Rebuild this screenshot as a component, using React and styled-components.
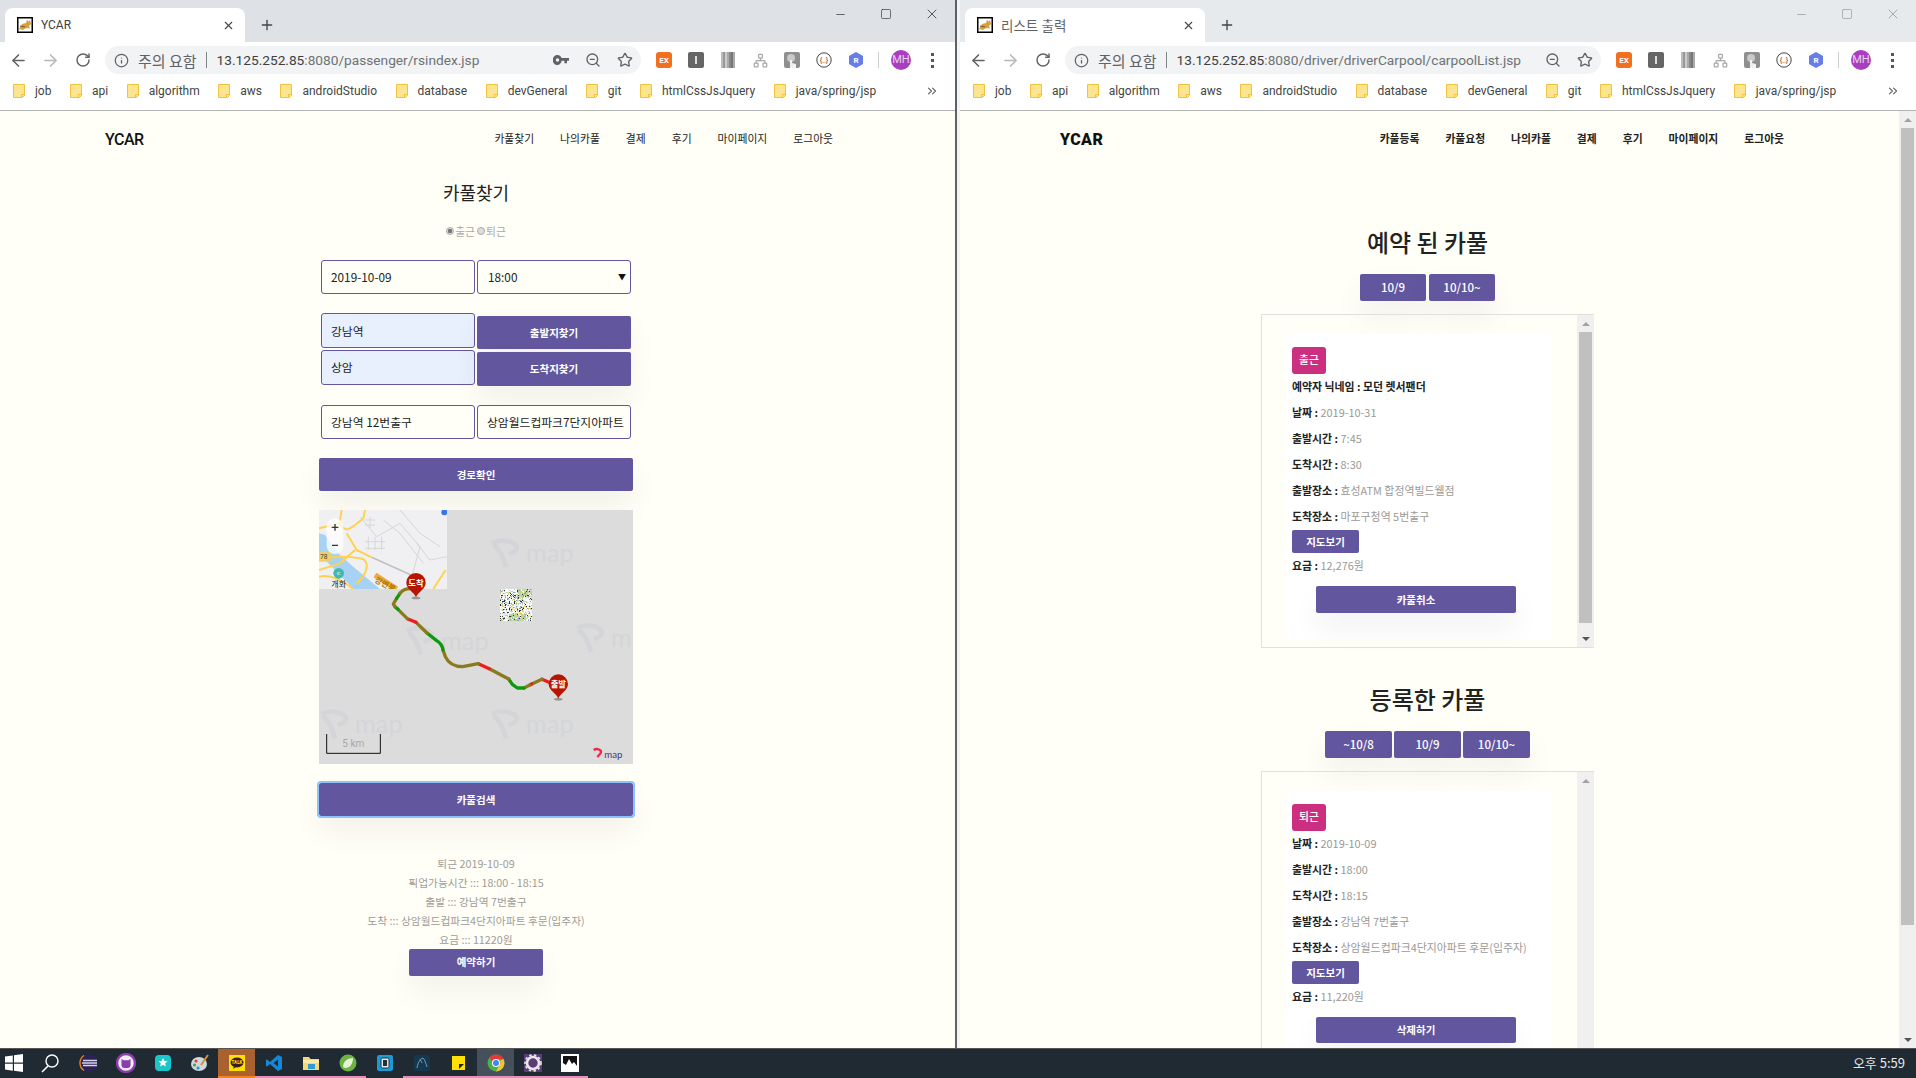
import React from 'react'
import styled, { createGlobalStyle } from 'styled-components'
import { ArrowLeft, ArrowRight, RotateCw, Info, ZoomOut, Star, Plus, X, Minus, Square, ChevronsRight, Network } from 'lucide-react'

const KR = `"Noto Sans CJK KR", "Noto Sans", sans-serif`
const UI = `Roboto, "Noto Sans CJK KR", sans-serif`
const PURPLE = '#62569f'

const Global = createGlobalStyle`
  html, body { margin: 0; padding: 0; background: #fffff8; overflow: hidden; }
  * { box-sizing: border-box; }
`

const Screen = styled.div`
  width: 1916px;
  height: 1078px;
  display: flex;
  flex-direction: column;
  overflow: hidden;
  font-family: ${KR};
`
const Desktop = styled.div`
  height: 1048px;
  display: flex;
`
const Divider = styled.div`
  width: 2px;
  background: #5e6165;
`
const Win = styled.div`
  width: ${p => (p.$right ? '959px' : '955px')};
  display: flex;
  flex-direction: column;
  border-left: ${p => (p.$right ? '3px solid #f3f4f5' : '0')};
`

/* browser chrome */
const TabStrip = styled.div`
  height: 42px;
  display: flex;
  background: ${p => (p.$active ? '#dee1e6' : '#e7eaed')};
  padding-left: 5px;
`
const Tab = styled.div`
  width: 240px;
  height: 34px;
  margin-top: 8px;
  display: flex;
  align-items: center;
  padding: 0 10px 0 12px;
  background: #fff;
  border-radius: 8px 8px 0 0;
  font: 12px ${UI};
  color: ${p => (p.$active ? '#3c4043' : '#5f6368')};
`
const TabTitle = styled.span`
  margin-left: 8px;
  margin-right: auto;
  font-size: ${p => (p.$kr ? '13.5px' : '12px')};
`
const TabClose = styled.span`
  display: flex;
  color: #444;
`
const NewTab = styled.div`
  width: 28px;
  margin-left: 8px;
  padding-top: 14px;
  text-align: center;
  color: #444;
`
const Controls = styled.div`
  margin-left: auto;
  display: flex;
  color: ${p => (p.$active ? '#222' : '#8a8d90')};
`
const Control = styled.div`
  width: 46px;
  height: 28px;
  display: flex;
  align-items: center;
  justify-content: center;
`
const Toolbar = styled.div`
  height: 36px;
  display: flex;
  align-items: center;
  background: #fff;
  padding-left: 2px;
`
const NavIcon = styled.div`
  width: 32.5px;
  display: flex;
  justify-content: center;
  color: ${p => (p.$off ? '#b6b8ba' : '#5f6368')};
`
const Omnibox = styled.div`
  width: 536px;
  height: 28px;
  flex: none;
  margin-left: 5.5px;
  display: flex;
  align-items: center;
  padding: 0 8px 0 9px;
  background: #f1f3f4;
  border-radius: 14px;
  color: #5f6368;
`
const Warn = styled.span`
  margin-left: 9px;
  font: 15px ${KR};
  color: #5f6368;
`
const Sep = styled.span`
  width: 1px;
  height: 16px;
  margin: 0 10px 0 9px;
  background: #80868b;
`
const Url = styled.span`
  font: 13.7px ${UI};
  color: #6d7276;
  b { font-weight: 400; color: #3c4043; }
`
const BoxIcons = styled.div`
  margin-left: auto;
  display: flex;
  gap: 16px;
  align-items: center;
  color: #5f6368;
`
const Exts = styled.div`
  margin-left: 7px;
  display: flex;
  align-items: center;
`
const Ext = styled.div`
  width: 32px;
  flex: none;
  display: flex;
  justify-content: center;
`
const ExtBar = styled.span`
  width: 1px;
  height: 16px;
  flex: none;
  margin: 0 12px 0 6px;
  background: #ccc;
`
const Avatar = styled.div`
  width: 20px;
  height: 20px;
  flex: none;
  border-radius: 50%;
  background: #a93fbf;
  color: #e9d0ee;
  font: 11px/20px ${UI};
  text-align: center;
`
const Dots = styled.div`
  margin-left: 20px;
  width: 3px;
  height: 15px;
  flex: none;
  background: radial-gradient(circle at 50% 1.5px, #555 1.5px, transparent 1.7px) 0 0 / 3px 6px repeat-y;
`
const Bookmarks = styled.div`
  height: 33px;
  display: flex;
  align-items: center;
  gap: 18.5px;
  padding: 0 0 7px 13px;
  background: #fff;
  border-bottom: 1px solid #b4b4b4;
  font: 12px ${UI};
  color: #444;
`
const Mark = styled.div`
  display: flex;
  align-items: center;
  gap: 10px;
`
const More = styled.div`
  margin-left: auto;
  margin-right: 16px;
  color: #666;
  display: flex;
`

/* pages */
const Page = styled.div`
  flex: 1;
  min-height: 0;
  display: flex;
  background: #fffff7;
  overflow: hidden;
`
const Main = styled.div`
  flex: 1;
  min-width: 0;
  display: flex;
  flex-direction: column;
`
const Nav = styled.div`
  height: 56px;
  flex: none;
  display: flex;
  align-items: center;
  justify-content: space-between;
  padding: ${p => p.$pad};
`
const Logo = styled.div`
  font-family: Roboto, sans-serif;
  font-size: 16px;
  font-weight: ${p => (p.$heavy ? 900 : 500)};
  letter-spacing: ${p => (p.$heavy ? '0.4px' : '-0.5px')};
  color: #111;
`
const Links = styled.div`
  display: flex;
  gap: 26px;
  padding-bottom: 2px;
  font-size: 10.8px;
  font-weight: ${p => (p.$heavy ? 700 : 400)};
  color: #222;
`
const Form = styled.div`
  width: 314px;
  margin-left: 319px;
  display: flex;
  flex-direction: column;
`
const Title = styled.h1`
  margin: 11px 0 0;
  height: 28px;
  font-size: 18px;
  line-height: 28px;
  font-weight: 400;
  text-align: center;
  color: #222;
`
const Radios = styled.div`
  margin-top: 17px;
  height: 16px;
  display: flex;
  justify-content: center;
  align-items: center;
  padding-right: 2px;
  font-size: 10.8px;
  color: #aaa;
`
const Radio = styled.span`
  width: 8px;
  height: 8px;
  margin: 0 1px 0 2px;
  border: 1px solid #aaa;
  border-radius: 50%;
  background: ${p => (p.$on ? 'radial-gradient(circle, #777 2px, #ddd 2.5px)' : '#ddd')};
`
const Pair = styled.div`
  margin-top: ${p => p.$top};
  padding: 0 2px;
  display: grid;
  grid-template-columns: 154px 154px;
  gap: 0 2px;
`
const FieldStack = styled.div`
  display: flex;
  flex-direction: column;
  gap: 1.5px;
`
const Field = styled.input`
  width: 154px;
  height: ${p => p.$h || '34px'};
  margin: 0;
  padding: 0 0 1px 9px;
  border: 1px solid ${PURPLE};
  border-radius: 3px;
  outline: 0;
  background: ${p => (p.$auto ? '#e8f0fe' : '#fffff7')};
  font: 11.8px ${KR};
  color: #222;
`
const SelectBox = styled.div`
  height: 34px;
  display: flex;
  align-items: center;
  justify-content: space-between;
  padding: 0 4px 1px 10px;
  border: 1px solid ${PURPLE};
  border-radius: 3px;
  font-size: 11.8px;
  color: #222;
  span:last-child { font-size: 8px; color: #111; }
`
const Btn = styled.div`
  display: flex;
  align-items: center;
  justify-content: center;
  flex: none;
  width: ${p => p.$w || 'auto'};
  height: ${p => p.$h || '27px'};
  margin: ${p => p.$m || '0'};
  padding-bottom: 1px;
  background: ${PURPLE};
  border-radius: 2px;
  color: #fff;
  font-size: ${p => p.$fs || '10.5px'};
  font-weight: ${p => (p.$light ? 500 : 700)};
  box-shadow: ${p => (p.$flat ? 'none' : '0 15px 30px rgba(0,0,0,.06)')};
  outline: ${p => (p.$focus ? '2px solid #8fc1fb' : '0')};
`
const FindButtons = styled.div`
  display: flex;
  flex-direction: column;
  gap: 3px;
  padding-top: 3px;
`
const MapFrame = styled.div`
  margin-top: 19px;
  height: 254px;
  background: #dcdcdc;
  svg { display: block; }
`
const Result = styled.div`
  margin-top: 37.5px;
  font-size: 10.75px;
  line-height: 19px;
  text-align: center;
  color: #a09c98;
`

/* right page */
const Heading = styled.h2`
  margin: ${p => p.$top} 0 0;
  height: 36px;
  font-size: 24px;
  line-height: 36px;
  font-weight: 500;
  color: #222;
`
const List = styled.div`
  display: flex;
  flex-direction: column;
  align-items: center;
  padding-right: 4px;
`
const DateRow = styled.div`
  margin: 14px 0 13px;
  display: flex;
  gap: ${p => p.$gap};
`
const Box = styled.div`
  width: 333px;
  flex: none;
  height: ${p => p.$h};
  display: flex;
  border: 1px solid #e0e0dc;
  border-right: 0;
  padding-left: 24px;
`
const Card = styled.div`
  width: 266px;
  height: 305px;
  margin-top: 19px;
  padding: 13px 0 0 6px;
  flex: none;
  background: #fff;
  border-radius: 8px;
`
const Badge = styled.div`
  width: 34px;
  height: 27px;
  border-radius: 3px;
  background: #cd2f80;
  color: #fff;
  font-size: 10.8px;
  font-weight: 500;
  line-height: 25px;
  text-align: center;
`
const Row = styled.div`
  height: 26px;
  line-height: 25px;
  font-size: 10.9px;
  font-weight: 700;
  color: #222;
  white-space: nowrap;
  span { font-weight: 400; color: #9b9995; }
`
const Track = styled.div`
  width: 17px;
  margin-left: auto;
  flex: none;
  display: flex;
  flex-direction: column;
  align-items: center;
  background: #f0f0f0;
`
const ArrowCell = styled.div`
  height: 17px;
  flex: none;
  display: flex;
  align-items: center;
  justify-content: center;
  margin-top: ${p => p.$auto ? 'auto' : '0'};
  &::before {
    content: '';
    border-left: 4px solid transparent;
    border-right: 4px solid transparent;
    border-${p => (p.$down ? 'top' : 'bottom')}: 4px solid ${p => (p.$down ? '#555' : '#a3a3a3')};
  }
`
const Thumb = styled.div`
  width: 13px;
  height: ${p => p.$h};
  flex: none;
  background: #c0c0c0;
`

/* taskbar */
const Taskbar = styled.div`
  height: 30px;
  flex: none;
  display: flex;
  align-items: stretch;
  background: #1f2a33;
  border-top: 1px solid #555;
  padding-left: 0;
`
const TaskSlot = styled.div`
  width: 37px;
  flex: none;
  margin-left: ${p => p.$ml || 0};
  display: flex;
  align-items: center;
  justify-content: center;
  background: ${p => p.$bg || 'transparent'};
  border-bottom: 2px solid ${p => p.$line || 'transparent'};
`
const Clock = styled.div`
  margin-left: auto;
  padding-right: 11px;
  line-height: 28px;
  font-size: 13px;
  color: #e8e8e8;
`

/* drawn things */
const Folder = () => (
  <svg width="12" height="14" viewBox="0 0 12 14">
    <path d="M.5 .5h11v11l-2 2H.5z" fill="#fde58f" stroke="#f0c33c" />
    <path d="M8.5 13.5v-3h3" fill="none" stroke="#f0c33c" />
  </svg>
)

const Favicon = () => (
  <svg width="16" height="16" viewBox="0 0 16 16">
    <rect x=".75" y=".75" width="14.5" height="14.5" fill="#fff" stroke="#000" strokeWidth="1.5" />
    <path d="M2 12l3-5 4-1 1-3 1.5 1.5L13 3l1 4-2 2 1 3-2-1-3 .5-2 1.5z" fill="#d8a03c" />
    <path d="M3 9l5 1" stroke="#6b5a3c" />
  </svg>
)

const KeyIcon = () => (
  <svg width="16" height="10" viewBox="0 0 16 10">
    <path d="M4.500 0a4.500 5 0 0 1 4.200 3H16v2.800h-2v2.400h-2.600V5.800H8.700A4.500 5 0 1 1 4.500 0zm0 3.200a1.700 1.800 0 1 0 0 3.600 1.700 1.800 0 0 0 0-3.600z" fill="#5f6368" fillRule="evenodd" />
  </svg>
)

const ExtEx = () => (
  <svg width="16" height="16" viewBox="0 0 16 16">
    <rect width="16" height="16" rx="3" fill="#f26f21" />
    <text x="8" y="11" textAnchor="middle" fontSize="8" fontWeight="700" fill="#fff" fontFamily="Roboto">EX</text>
  </svg>
)
const ExtBlock = () => (
  <svg width="16" height="16" viewBox="0 0 16 16">
    <rect width="16" height="16" rx="2" fill="#666" />
    <rect x="7" y="4" width="2" height="8" fill="#ddd" />
  </svg>
)
const ExtStripes = () => (
  <svg width="14" height="16" viewBox="0 0 14 16">
    {['#bbb', '#999', '#ccc', '#aaa', '#888', '#777', '#aaa'].map((c, i) => (
      <rect key={i} x={i * 2} width="2" height="16" fill={c} />
    ))}
  </svg>
)
const ExtPhoto = () => (
  <svg width="16" height="16" viewBox="0 0 16 16">
    <rect width="16" height="16" rx="2" fill="#8f8f8f" />
    <circle cx="7" cy="6" r="4" fill="#c9c9c9" />
    <path d="M6 16V8h2v3l4 1v4z" fill="#eef2f7" />
  </svg>
)
const ExtCode = () => (
  <svg width="16" height="16" viewBox="0 0 16 16">
    <circle cx="8" cy="8" r="7.2" fill="#fff" stroke="#444" />
    <text x="8" y="10.5" textAnchor="middle" fontSize="7" fill="#333" fontFamily="Roboto">{'{..}'}</text>
  </svg>
)
const ExtHex = () => (
  <svg width="16" height="16" viewBox="0 0 16 16">
    <path d="M8 0l7 4v8l-7 4-7-4V4z" fill="#667eea" />
    <text x="8" y="11" textAnchor="middle" fontSize="8" fontWeight="700" fill="#fff" fontFamily="Roboto">R</text>
  </svg>
)

const routeParts = [
  ['#ee1c1c', 'M750 548 L726 538'],
  ['#8b7a1c', 'M726 538 L695 552'],
  ['#ee1c1c', 'M695 552 L688 556'],
  ['#8b7a1c', 'M688 556 L672 564'],
  ['#0b9a0b', 'M672 564 L652 564 L637 553 L626 537'],
  ['#8b7a1c', 'M626 537 L568 506'],
  ['#ee1c1c', 'M568 506 L535 491'],
  ['#8b7a1c', 'M535 491 L488 500 C462 500 445 490 436 470 L429 450'],
  ['#0b9a0b', 'M429 450 C427 436 420 428 410 422 L381 399'],
  ['#8b7a1c', 'M381 399 L348 367'],
  ['#ee1c1c', 'M348 367 L322 356'],
  ['#8b7a1c', 'M322 356 L294 328'],
  ['#0b9a0b', 'M294 328 L285 320'],
  ['#8b7a1c', 'M285 320 L280 312 L290 295'],
  ['#0b9a0b', 'M290 295 L300 280'],
  ['#8b7a1c', 'M300 280 C308 270 318 266 330 266'],
]

const waterMarks = [[570, 115, 'map'], [315, 378, 'map'], [825, 370, 'm'], [57, 628, 'map'], [570, 628, 'map']]

// speckled tile that failed to load, looks random but stays the same each run
const noise = []
let seed = 12345
for (let r = 0; r < 32; r++) {
  for (let c = 0; c < 32; c++) {
    seed = (seed * 1103515245 + 12345) & 0x7fffffff
    const k = (seed >> 8) % 100
    const corner = (r > 24 && c > 8 && c < 26) || (r < 8 && c > 16)
    let fill = '#ffffff'
    if (k < 8) fill = '#333333'
    else if (k < 14) fill = '#7ea0c8'
    else if (k < 20) fill = '#e8cf72'
    else if (k < (corner ? 85 : 34)) fill = '#bcd596'
    else if (k < (corner ? 92 : 60)) fill = '#ececec'
    noise.push(<rect key={r + '-' + c} x={600 + c * 3} y={267 + r * 3} width="3" height="3" fill={fill} />)
  }
}

const Pin = ({ x, y, label }) => (
  <g>
    <ellipse cx={x} cy={y + 2} rx="13" ry="4" fill="#777" opacity=".7" />
    <path d={`M${x} ${y} C${x - 5} ${y - 16} ${x - 29} ${y - 24} ${x - 29} ${y - 44} A29 29 0 1 1 ${x + 29} ${y - 44} C${x + 29} ${y - 24} ${x + 5} ${y - 16} ${x} ${y}Z`} fill="#b81500" />
    <text x={x} y={y - 35} textAnchor="middle" fontSize="25" fontWeight="700" fill="#fff" fontFamily={KR}>{label}</text>
  </g>
)

const RouteMap = () => (
  <svg width="314" height="254" viewBox="57 30 942 762">
    <defs>
      <clipPath id="tile"><rect x="57" y="30" width="384" height="237" /></clipPath>
    </defs>
    <rect x="57" y="30" width="942" height="762" fill="#dcdcdc" />
    {waterMarks.map(([x, y, word]) => (
      <g key={x + '-' + y} fill="none" stroke="#d4d5d8">
        <path d={`M${x + 6} ${y + 14} C${x + 30} ${y + 2} ${x + 62} ${y + 4} ${x + 80} ${y + 22} C${x + 84} ${y + 40} ${x + 66} ${y + 42} ${x + 56} ${y + 48}`} strokeWidth="14" />
        <path d={`M${x + 10} ${y + 20} C${x + 30} ${y + 30} ${x + 40} ${y + 60} ${x + 48} ${y + 86}`} strokeWidth="14" />
        <text x={x + 108} y={y + 72} fontSize="76" fill="#d4d5d8" stroke="none" fontFamily="Lato, sans-serif">{word}</text>
      </g>
    ))}
    <g clipPath="url(#tile)">
      <rect x="57" y="30" width="384" height="237" fill="#f0f0f3" />
      <path d="M57 100 L75 105 L120 165 L165 205 L240 267 L160 267 L110 215 L70 175 L57 155Z" fill="#a8d2f4" />
      <path d="M57 155h36v30H57z" fill="#e8cf72" />
      <g fill="none" stroke="#d6d6d6" strokeWidth="3">
        <path d="M180 50l50 60 70-40 60 70-30 110" />
        <path d="M195 125h60M195 145h60M205 110v40M225 110v40M245 110v40M195 60h30M195 75h30M210 50v35" />
        <path d="M250 60l50 40 70 90M300 30l60 70 60 40M350 130l40 50 50-10" />
        <path d="M215 172 L340 228" stroke="#c4bfbf" strokeWidth="5" />
      </g>
      <g fill="none" stroke="#ffd24d" strokeWidth="6">
        <path d="M125 30 L118 70 L57 85" />
        <path d="M118 70 C135 100 150 90 190 55 L195 30" />
        <path d="M140 100 L170 150 L215 172" />
        <path d="M57 180 C110 165 150 170 180 175 C215 180 200 225 170 250" />
        <path d="M57 230 C95 220 130 245 160 267" />
        <path d="M57 210 L120 190 L165 150" />
        <path d="M437 210 L400 267" />
        <path d="M225 225 L290 267" stroke="#f2a93b" strokeWidth="16" />
      </g>
      <circle cx="116" cy="220" r="16" fill="#3fb8ae" />
      <text x="116" y="225" textAnchor="middle" fontSize="13" fill="#fff" fontFamily="Roboto">IC</text>
      <text x="116" y="262" textAnchor="middle" fontSize="24" fill="#222" fontFamily={KR}>개화</text>
      <text x="60" y="177" fontSize="20" fill="#444" fontFamily="Roboto">78</text>
      <text x="222" y="245" fontSize="24" fontWeight="700" fill="#a87a08" fontFamily={KR} transform="rotate(28 222 245)">강변북</text>
      <circle cx="433" cy="37" r="9" fill="#3576e8" />
      <rect x="80" y="55" width="50" height="107" rx="24" fill="#fff" opacity=".75" />
      <path d="M105 72v20M95 82h20M96 136h18" stroke="#333" strokeWidth="4" />
    </g>
    {noise}
    <g fill="none" strokeWidth="10" strokeLinecap="round" strokeLinejoin="round">
      {routeParts.map(([c, d], i) => <path key={i} d={d} stroke={c} />)}
    </g>
    <Pin x={348} y={292} label="도착" />
    <Pin x={775} y={596} label="출발" />
    <path d="M80 702v58h161v-58" fill="none" stroke="#111" strokeWidth="3" />
    <text x="160" y="742" textAnchor="middle" fontSize="30" fill="#a8a8a8" fontFamily="Roboto">5 km</text>
    <path d="M881 750 C890 744 904 748 903 757 C902 764 895 762 893 772" fill="none" stroke="#ea2a4c" strokeWidth="7" />
    <text x="913" y="773" fontSize="29" fill="#3c3a75" fontFamily="Lato, sans-serif">map</text>
  </svg>
)

const task = {
  win: (
    <svg width="20" height="20" viewBox="0 0 20 20"><path d="M1 3.600l7.800-1.100v7H1zM10 2.300L19 1v8.500h-9zM1 10.700h7.800v7L1 16.500zM10 10.700h9V19l-9-1.300z" fill="#fff" /></svg>
  ),
  search: (
    <svg width="20" height="20" viewBox="0 0 20 20"><circle cx="12" cy="8" r="6" fill="none" stroke="#fff" strokeWidth="1.4" /><path d="M8 13l-6 6" stroke="#fff" strokeWidth="1.6" /></svg>
  ),
  eclipse: (
    <svg width="20" height="20" viewBox="0 0 20 20"><circle cx="10" cy="10" r="9" fill="#2c2255" /><path d="M4 7.500h14M3 10h15M4 12.500h14" stroke="#d8d4ec" strokeWidth="1.4" /><path d="M5 2.500a9 9 0 0 0 0 15" fill="none" stroke="#e8871e" strokeWidth="1.4" /></svg>
  ),
  cat: (
    <svg width="20" height="20" viewBox="0 0 20 20"><circle cx="10" cy="10" r="9" fill="#f1e9f6" stroke="#8a3fa8" strokeWidth="2.4" /><path d="M5.500 6l2 1.300h5L14.500 6v6.500a3 3 0 0 1-3 2.500h-3a3 3 0 0 1-3-2.500z" fill="#8a3fa8" /></svg>
  ),
  star: (
    <svg width="18" height="20" viewBox="0 0 18 20"><rect x="1" y="2" width="16" height="16" rx="4" fill="#1cc5c8" /><path d="M9 5l1.400 3 3.100.3-2.400 2.100.8 3.100L9 11.800l-2.900 1.700.8-3.100-2.400-2.100 3.100-.3z" fill="#fff" /></svg>
  ),
  paint: (
    <svg width="20" height="20" viewBox="0 0 20 20"><ellipse cx="9" cy="11" rx="8" ry="7" fill="#cfd8dc" /><circle cx="6" cy="8" r="1.500" fill="#e53935" /><circle cx="4.500" cy="12" r="1.500" fill="#43a047" /><circle cx="8" cy="15" r="1.500" fill="#1e88e5" /><path d="M11 12L18 2" stroke="#d98e3a" strokeWidth="2" /></svg>
  ),
  kakao: (
    <svg width="16" height="16" viewBox="0 0 16 16"><rect width="16" height="16" fill="#ffe000" /><ellipse cx="8" cy="7.500" rx="6.500" ry="5" fill="#3a1d1d" /><path d="M5 11l-1 3 3-2z" fill="#3a1d1d" /><text x="8" y="9.300" textAnchor="middle" fontSize="4.600" fontWeight="700" fill="#ffe000" fontFamily="Roboto">TALK</text></svg>
  ),
  vscode: (
    <svg width="18" height="18" viewBox="0 0 18 18"><path d="M13 1l4 2v12l-4 2-8-7-3 2.500L1 12V6l1-.5L5 8zM13 5.500L8.500 9l4.500 3.500z" fill="#1787d8" /></svg>
  ),
  folder: (
    <svg width="18" height="18" viewBox="0 0 18 18"><path d="M1 3h6l1.500 2H17v11H1z" fill="#f7d774" /><path d="M1 6h16v3H1z" fill="#fbe9a8" /><rect x="6" y="10" width="7" height="5" fill="#2e9ad6" /></svg>
  ),
  spring: (
    <svg width="18" height="18" viewBox="0 0 18 18"><circle cx="9" cy="9" r="8.500" fill="#6db33f" /><path d="M4 13C4 7 9 4 14 4c0 6-3 10-8 10" fill="#e6f3da" /></svg>
  ),
  box: (
    <svg width="18" height="18" viewBox="0 0 18 18"><rect x="1" y="1" width="16" height="16" rx="2" fill="#1c9ad6" /><rect x="5" y="4" width="8" height="10" rx="1.500" fill="#dfe9ef" stroke="#23303a" /><rect x="7" y="6" width="4" height="6" fill="#23303a" /></svg>
  ),
  sql: (
    <svg width="18" height="18" viewBox="0 0 18 18"><rect x="1" y="1" width="16" height="16" rx="3" fill="#16384f" /><path d="M4 14C5 8 7 5 10 4c2 2 3 6 4 9M7 5l2 4" fill="none" stroke="#6f9ab5" /></svg>
  ),
  note: (
    <svg width="16" height="16" viewBox="0 0 16 16"><path d="M1 1h13v14H1z" fill="#ffe000" /><path d="M8 14V9h5z" fill="#222" /></svg>
  ),
  chrome: (
    <svg width="18" height="18" viewBox="0 0 18 18"><circle cx="9" cy="9" r="8.500" fill="#4caf50" /><path d="M9 .5A8.500 8.500 0 0 1 16.400 5H9a4 4 0 0 0-3.800 2.800L2.400 3.600A8.500 8.500 0 0 1 9 .5z" fill="#e53935" /><path d="M16.400 5A8.500 8.500 0 0 1 9 17.500l3.400-6.300A4 4 0 0 0 13 7z" fill="#fbc02d" /><circle cx="9" cy="9" r="4" fill="#fff" /><circle cx="9" cy="9" r="3" fill="#4285f4" /></svg>
  ),
  gear: (
    <svg width="20" height="20" viewBox="0 0 20 20"><rect x="1" y="1" width="18" height="18" fill="#5b3b78" /><circle cx="10" cy="10" r="6" fill="none" stroke="#e8e8e8" strokeWidth="2.600" /><circle cx="10" cy="10" r="8" fill="none" stroke="#e8e8e8" strokeWidth="1.600" strokeDasharray="2.400 2.400" /></svg>
  ),
  photo: (
    <svg width="20" height="20" viewBox="0 0 20 20"><rect x="1" y="1" width="18" height="18" fill="#fff" /><path d="M3 3h14v10l-3-4-2 2-3-5-3 6-3-2z" fill="#111" /></svg>
  ),
}

const PINK = '#e58dbc'
const taskItems = [
  { k: 'win', ml: '-5px' }, { k: 'search', ml: '-1px' }, { k: 'eclipse', ml: '2px' }, { k: 'cat' }, { k: 'star' }, { k: 'paint' },
  { k: 'kakao', bg: '#a8612f', line: '#f58220' },
  { k: 'vscode', line: PINK }, { k: 'folder', line: PINK }, { k: 'spring', line: PINK }, { k: 'box' },
  { k: 'sql', line: PINK }, { k: 'note', line: PINK },
  { k: 'chrome', bg: '#46505a', line: PINK },
  { k: 'gear', line: PINK }, { k: 'photo', line: PINK },
]

const marks = ['job', 'api', 'algorithm', 'aws', 'androidStudio', 'database', 'devGeneral', 'git', 'htmlCssJsJquery', 'java/spring/jsp']

const Chrome = ({ active, title, path, showKey }) => (
  <>
    <TabStrip $active={active}>
      <Tab $active={active}>
        <Favicon />
        <TabTitle $kr={!active}>{title}</TabTitle>
        <TabClose><X size={13} strokeWidth={2} /></TabClose>
      </Tab>
      <NewTab><Plus size={16} strokeWidth={2} /></NewTab>
      <Controls $active={active}>
        <Control><Minus size={13} strokeWidth={1.2} /></Control>
        <Control><Square size={12} strokeWidth={1.2} /></Control>
        <Control><X size={16} strokeWidth={1.1} /></Control>
      </Controls>
    </TabStrip>
    <Toolbar>
      <NavIcon><ArrowLeft size={19} /></NavIcon>
      <NavIcon $off><ArrowRight size={19} /></NavIcon>
      <NavIcon><RotateCw size={16} strokeWidth={2.2} /></NavIcon>
      <Omnibox>
        <Info size={15} />
        <Warn>주의 요함</Warn>
        <Sep />
        <Url><b>13.125.252.85</b>{path}</Url>
        <BoxIcons>
          {showKey && <KeyIcon />}
          <ZoomOut size={16} />
          <Star size={16} />
        </BoxIcons>
      </Omnibox>
      <Exts>
        <Ext><ExtEx /></Ext>
        <Ext><ExtBlock /></Ext>
        <Ext><ExtStripes /></Ext>
        <Ext><Network size={15} color="#a9a9a9" /></Ext>
        <Ext><ExtPhoto /></Ext>
        <Ext><ExtCode /></Ext>
        <Ext><ExtHex /></Ext>
        <ExtBar />
        <Avatar>MH</Avatar>
        <Dots />
      </Exts>
    </Toolbar>
    <Bookmarks>
      {marks.map(m => <Mark key={m}><Folder /><span>{m}</span></Mark>)}
      <More><ChevronsRight size={14} /></More>
    </Bookmarks>
  </>
)

const Info2 = ({ label, children }) => <Row>{label} : <span>{children}</span></Row>

const SearchPage = () => (
  <Page>
    <Main>
      <Nav $pad="0 122px 0 105px">
        <Logo>YCAR</Logo>
        <Links>
          <span>카풀찾기</span><span>나의카풀</span><span>결제</span><span>후기</span><span>마이페이지</span><span>로그아웃</span>
        </Links>
      </Nav>
      <Form>
        <Title>카풀찾기</Title>
        <Radios><Radio $on />출근<Radio />퇴근</Radios>
        <Pair $top="21px">
          <Field readOnly value="2019-10-09" />
          <SelectBox><span>18:00</span><span>▼</span></SelectBox>
        </Pair>
        <Pair $top="19px">
          <FieldStack>
            <Field $auto $h="35px" readOnly value="강남역" />
            <Field $auto $h="35px" readOnly value="상암" />
          </FieldStack>
          <FindButtons>
            <Btn $h="33px">출발지찾기</Btn>
            <Btn $h="34px">도착지찾기</Btn>
          </FindButtons>
        </Pair>
        <Pair $top="19px">
          <Field readOnly value="강남역 12번출구" />
          <Field readOnly value="상암월드컵파크7단지아파트" />
        </Pair>
        <Btn $h="33px" $m="19px 0 0">경로확인</Btn>
        <MapFrame><RouteMap /></MapFrame>
        <Btn $h="33px" $m="19px 0 0" $focus>카풀검색</Btn>
        <Result>
          <div>퇴근 2019-10-09</div>
          <div>픽업가능시간 ::: 18:00 - 18:15</div>
          <div>출발 ::: 강남역 7번출구</div>
          <div>도착 ::: 상암월드컵파크4단지아파트 후문(입주자)</div>
          <div>요금 ::: 11220원</div>
        </Result>
        <Btn $w="134px" $m="0 0 0 90px">예약하기</Btn>
      </Form>
    </Main>
  </Page>
)

const ListPage = () => (
  <Page>
    <Main>
      <Nav $pad="0 115px 0 100px">
        <Logo $heavy>YCAR</Logo>
        <Links $heavy>
          <span>카풀등록</span><span>카풀요청</span><span>나의카풀</span><span>결제</span><span>후기</span><span>마이페이지</span><span>로그아웃</span>
        </Links>
      </Nav>
      <List>
        <Heading $top="57px">예약 된 카풀</Heading>
        <DateRow $gap="3px">
          <Btn $w="66px" $fs="11.5px" $light>10/9</Btn>
          <Btn $w="66px" $fs="11.5px" $light>10/10~</Btn>
        </DateRow>
        <Box $h="334px">
          <Card>
            <Badge>출근</Badge>
            <Row>예약자 닉네임 : 모던 렛서팬더</Row>
            <Info2 label="날짜">2019-10-31</Info2>
            <Info2 label="출발시간">7:45</Info2>
            <Info2 label="도착시간">8:30</Info2>
            <Info2 label="출발장소">효성ATM 합정역빌드웰점</Info2>
            <Info2 label="도착장소">마포구청역 5번출구</Info2>
            <Btn $w="67px" $h="23px" $flat>지도보기</Btn>
            <Info2 label="요금">12,276원</Info2>
            <Btn $w="200px" $m="7px 0 0 24px">카풀취소</Btn>
          </Card>
          <Track>
            <ArrowCell />
            <Thumb $h="291px" />
            <ArrowCell $down $auto />
          </Track>
        </Box>
        <Heading $top="33px">등록한 카풀</Heading>
        <DateRow $gap="2px">
          <Btn $w="67px" $fs="11.5px" $light>~10/8</Btn>
          <Btn $w="67px" $fs="11.5px" $light>10/9</Btn>
          <Btn $w="67px" $fs="11.5px" $light>10/10~</Btn>
        </DateRow>
        <Box $h="334px">
          <Card>
            <Badge>퇴근</Badge>
            <Info2 label="날짜">2019-10-09</Info2>
            <Info2 label="출발시간">18:00</Info2>
            <Info2 label="도착시간">18:15</Info2>
            <Info2 label="출발장소">강남역 7번출구</Info2>
            <Info2 label="도착장소">상암월드컵파크4단지아파트 후문(입주자)</Info2>
            <Btn $w="67px" $h="23px" $flat>지도보기</Btn>
            <Info2 label="요금">11,220원</Info2>
            <Btn $w="200px" $h="26px" $m="7px 0 0 24px">삭제하기</Btn>
          </Card>
          <Track>
            <ArrowCell />
          </Track>
        </Box>
      </List>
    </Main>
    <Track>
      <ArrowCell />
      <Thumb $h="797px" />
      <ArrowCell $down $auto />
    </Track>
  </Page>
)

const App = () => (
  <Screen>
    <Global />
    <Desktop>
      <Win>
        <Chrome active title="YCAR" path=":8080/passenger/rsindex.jsp" showKey />
        <SearchPage />
      </Win>
      <Divider />
      <Win $right>
        <Chrome title="리스트 출력" path=":8080/driver/driverCarpool/carpoolList.jsp" />
        <ListPage />
      </Win>
    </Desktop>
    <Taskbar>
      {taskItems.map(t => (
        <TaskSlot key={t.k} $ml={t.ml} $bg={t.bg} $line={t.line}>{task[t.k]}</TaskSlot>
      ))}
      <Clock>오후 5:59</Clock>
    </Taskbar>
  </Screen>
)

export default App
